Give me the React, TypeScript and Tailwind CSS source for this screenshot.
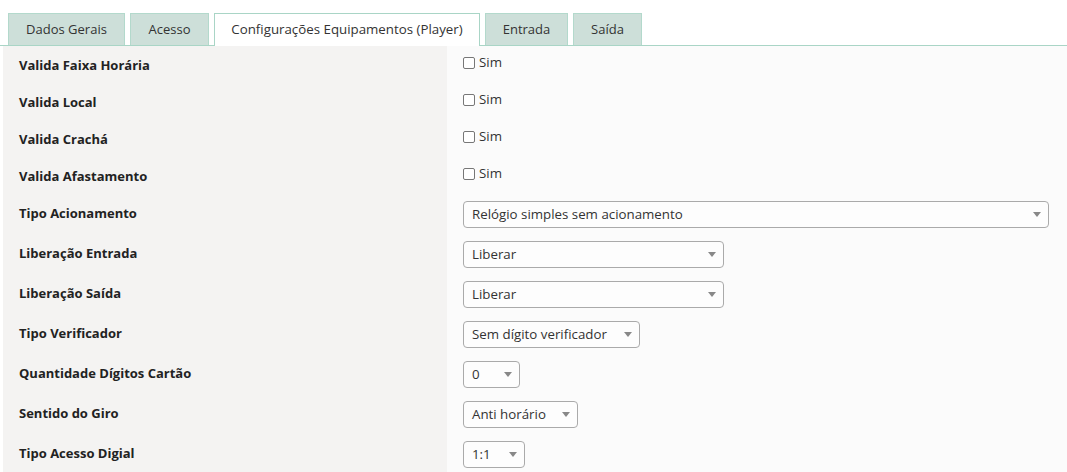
import React from 'react'

const tabs: Array<{ label: string; width: string }> = [
  { label: 'Dados Gerais', width: 'w-[117px]' },
  { label: 'Acesso', width: 'w-[79px]' },
  { label: 'Configurações Equipamentos (Player)', width: 'w-[266px]' },
  { label: 'Entrada', width: 'w-[83px]' },
  { label: 'Saída', width: 'w-[69px]' },
]
const active = 2

const checkRows = ['Valida Faixa Horária', 'Valida Local', 'Valida Crachá', 'Valida Afastamento']

const selectRows: Array<{ label: string; value: string; width: string }> = [
  { label: 'Tipo Acionamento', value: 'Relógio simples sem acionamento', width: 'w-[586px]' },
  { label: 'Liberação Entrada', value: 'Liberar', width: 'w-[261px]' },
  { label: 'Liberação Saída', value: 'Liberar', width: 'w-[261px]' },
  { label: 'Tipo Verificador', value: 'Sem dígito verificador', width: 'w-[177px]' },
  { label: 'Quantidade Dígitos Cartão', value: '0', width: 'w-[57px]' },
  { label: 'Sentido do Giro', value: 'Anti horário', width: 'w-[115px]' },
  { label: 'Tipo Acesso Digial', value: '1:1', width: 'w-[62px]' },
]

function Select({ value, width }: { value: string; width: string }) {
  return (
    <div
      className={`${width} h-[27px] flex items-center justify-between pl-[8px] pr-[7px] pt-px border border-[#aaaaaa] rounded-[4px] bg-[#fdfdfd] text-[13.3px] text-[#333]`}
    >
      <span>{value}</span>
      <svg width="8" height="5" viewBox="0 0 8 5" className="shrink-0">
        <path d="M0 0 L8 0 L4 5 Z" fill="#888888" />
      </svg>
    </div>
  )
}

export default function App() {
  return (
    <div className="w-[1067px] h-[472px] bg-white overflow-hidden font-['Open_Sans',sans-serif] text-[#222]">
      {/* Tabs */}
      <div className="pt-[13px] flex gap-[5px] pl-[8px] border-b border-[#a9d5c6] h-[46px]">
        {tabs.map((t, i) => (
          <div
            key={t.label}
            className={
              i === active
                ? `${t.width} h-[33px] flex items-center justify-center bg-white border border-b-0 border-[#a9d5c6] text-[13.3px] text-[#333] -mb-px`
                : `${t.width} h-[32px] flex items-center justify-center bg-[#cddfd9] border border-b-0 border-[#b3d9cc] text-[13px] text-[#333]`
            }
          >
            {t.label}
          </div>
        ))}
      </div>

      {/* Form */}
      <div className="flex pl-[3px]">
        <div className="w-[444px] bg-[#f4f3f2]">
          {checkRows.map((l) => (
            <div key={l} className="h-[37px] flex items-center pt-[2px] pl-[16px] text-[13px] font-bold">
              {l}
            </div>
          ))}
          {selectRows.map((r) => (
            <div key={r.label} className="h-[40px] flex items-center pl-[16px] text-[13px] font-bold">
              {r.label}
            </div>
          ))}
        </div>
        <div className="flex-1 bg-[#fbfbfb] pl-[16px]">
          {checkRows.map((l) => (
            <div key={l} className="h-[37px] flex items-start pt-[7px]">
              <label className="flex items-center gap-[4px] text-[13.3px] text-[#333]">
                <span className="w-[12px] h-[12px] border border-[#777] rounded-[2px] bg-white inline-block" />
                Sim
              </label>
            </div>
          ))}
          {selectRows.map((r) => (
            <div key={r.label} className="h-[40px] flex items-center">
              <Select value={r.value} width={r.width} />
            </div>
          ))}
        </div>
      </div>
    </div>
  )
}
